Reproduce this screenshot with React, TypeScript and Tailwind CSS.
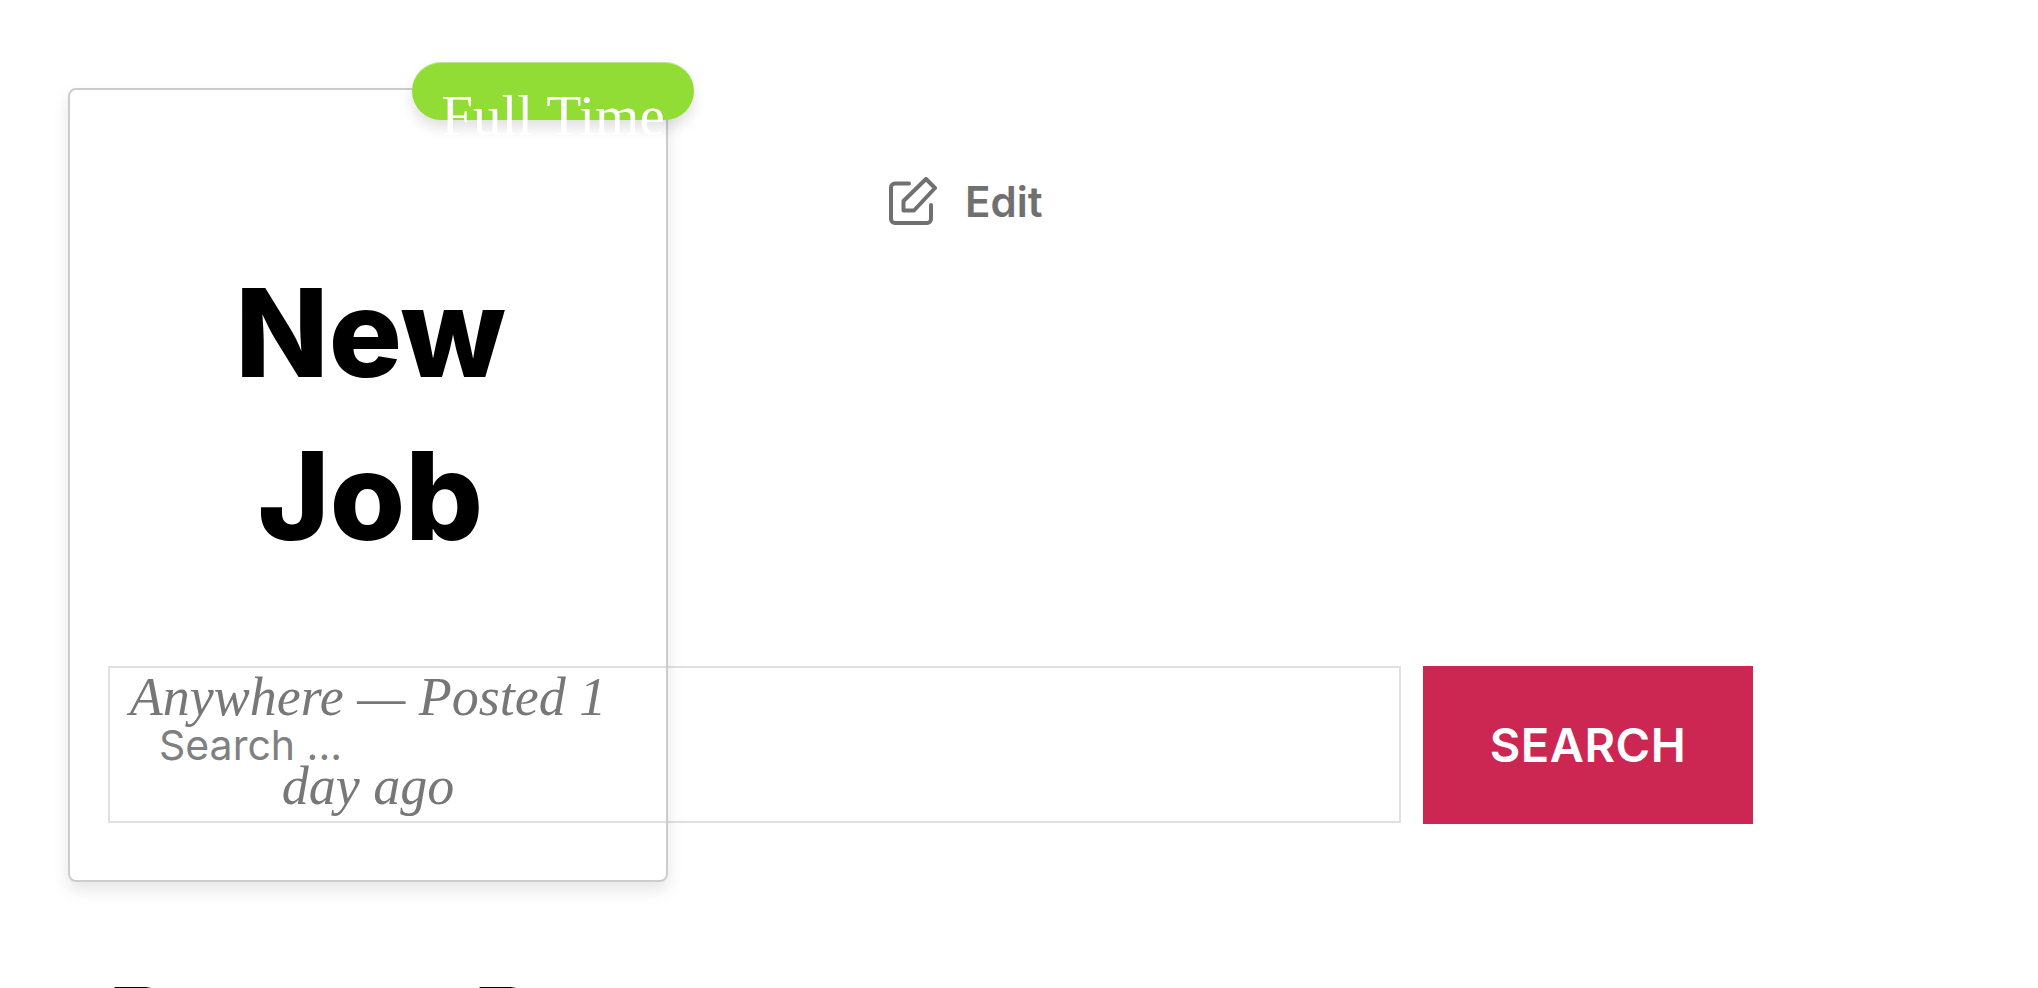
import React from 'react';

const inter = "font-['Inter',sans-serif]";

const EditIcon = () => (
  <svg width="48" height="48" viewBox="0 0 48 48" fill="none" stroke="#707070" strokeWidth="4" strokeLinecap="round" strokeLinejoin="round">
    <path d="M20 6.5H6a4 4 0 0 0-4 4V42a4 4 0 0 0 4 4h32a4 4 0 0 0 4-4V28" />
    <path d="M14.5 33.5h10.5L46 11 37 2 14.5 24z" />
  </svg>
);

const JobCard = () => (
  <div className="absolute left-[68px] top-[88px] w-[600px] h-[794px] rounded-[8px] border-2 border-[#cccccc] shadow-[0_8px_16px_rgba(0,0,0,0.1)] flex flex-col items-center">
    <span className="absolute -top-[28px] -right-[28px] w-[282px] h-[58px] rounded-full bg-[#91dd36] border-t border-[#bce889] shadow-[0_8px_14px_rgba(0,0,0,0.12)] text-center text-white text-[57px] leading-[105px] whitespace-nowrap font-['Liberation_Serif',serif]">
      Full Time
    </span>
    <h2 className={`mt-[161px] ml-[5px] w-[300px] text-center text-[122px] leading-[163px] font-extrabold text-black ${inter}`}>
      New Job
    </h2>
    <p className="mt-[76px] w-[520px] text-center text-[54px] leading-[89px] italic text-[#777777] font-['Liberation_Serif',serif]">
      Anywhere — Posted 1 day ago
    </p>
  </div>
);

export default function App() {
  return (
    <div className={`relative h-screen overflow-hidden bg-white ${inter}`}>
      <JobCard />
      <div className="flex flex-col px-[108px] pt-[177px]">
        <a className="ml-[781px] flex items-center gap-[28px] h-[48px] text-[42px] font-semibold text-[#707070]">
          <EditIcon />
          Edit
        </a>
        <div className="mt-[441px] flex gap-[22px] items-start">
          <input
            placeholder="Search ..."
            className="w-[1293px] h-[157px] border-2 border-[#e0e0e0] pl-[49px] text-[41px] outline-none placeholder:text-[#808080]"
          />
          <button className="w-[330px] h-[158px] bg-[#cc2753] text-white text-[47px] font-semibold tracking-[0.01em]">
            SEARCH
          </button>
        </div>
        <h3 className="mt-[150px] text-[100px] leading-none font-bold text-black whitespace-nowrap">
          Recent Posts
        </h3>
      </div>
    </div>
  );
}
